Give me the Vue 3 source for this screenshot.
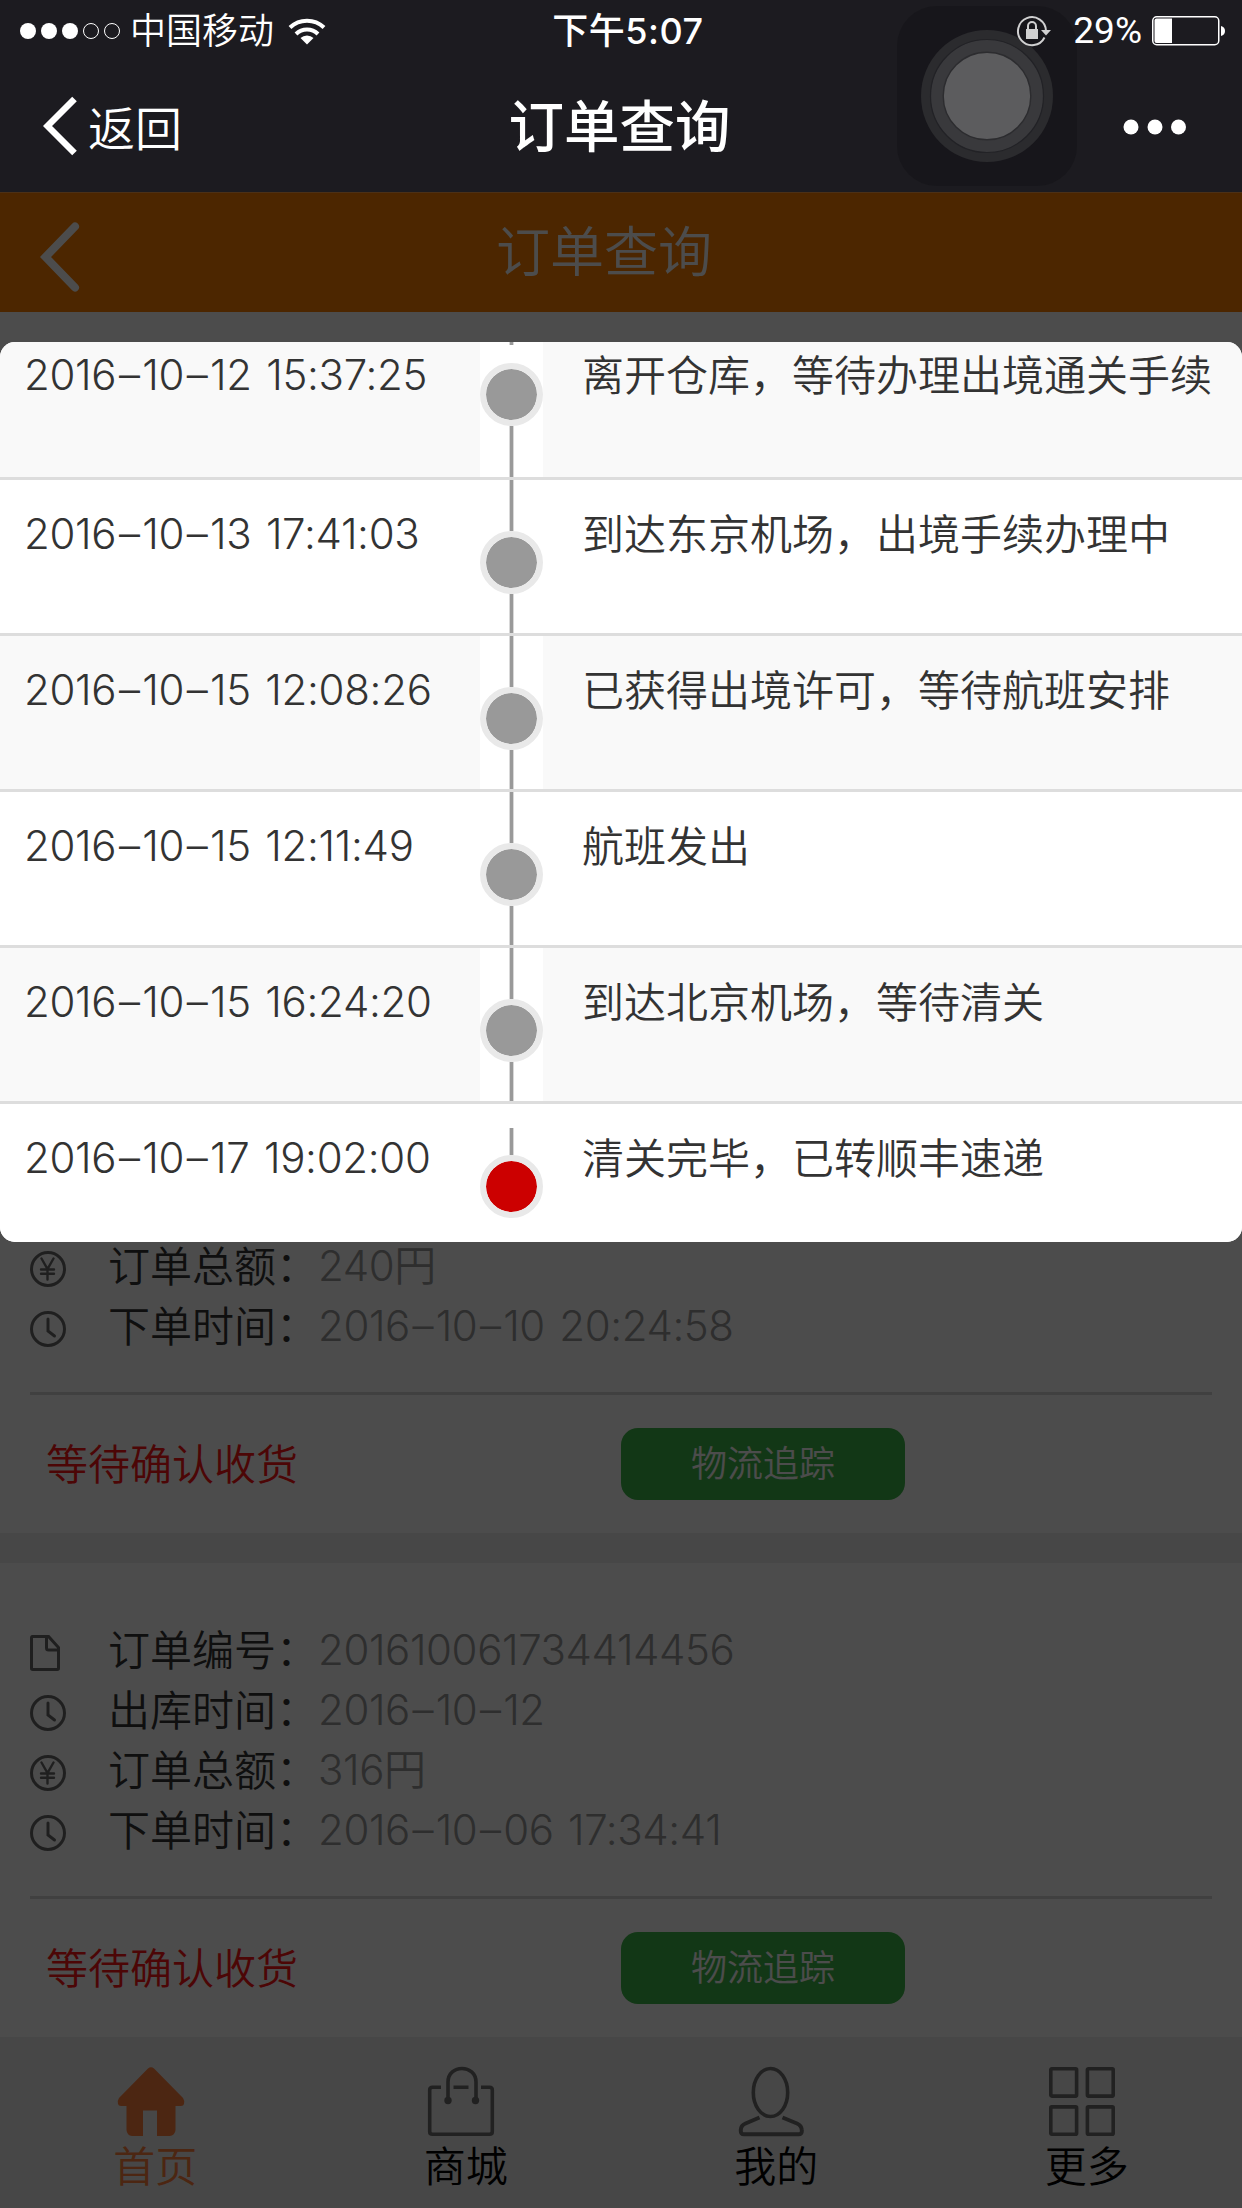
<!-- src/App.vue -->

<script setup>
import { computed } from 'vue';

// === ORDERS ===
const orders = [
  {
    id: 1,
    rows: [
      { icon: 'yen', label: '订单总额：', value: '240円' },
      { icon: 'clock', label: '下单时间：', value: '2016–10–10 20:24:58' },
    ],
    status: '等待确认收货',
  },
  {
    id: 2,
    rows: [
      { icon: 'doc', label: '订单编号：', value: '201610061734414456' },
      { icon: 'clock', label: '出库时间：', value: '2016–10–12' },
      { icon: 'yen', label: '订单总额：', value: '316円' },
      { icon: 'clock', label: '下单时间：', value: '2016–10–06 17:34:41' },
    ],
    status: '等待确认收货',
  },
];

// === LOGISTICS ===
const events = [
  { time: '2016–10–12 15:37:25', text: '离开仓库，等待办理出境通关手续' },
  { time: '2016–10–13 17:41:03', text: '到达东京机场，出境手续办理中' },
  { time: '2016–10–15 12:08:26', text: '已获得出境许可，等待航班安排' },
  { time: '2016–10–15 12:11:49', text: '航班发出' },
  { time: '2016–10–15 16:24:20', text: '到达北京机场，等待清关' },
  { time: '2016–10–17 19:02:00', text: '清关完毕，已转顺丰速递' },
];

const track = computed(() =>
  events.map((e, i) => ({
    ...e,
    first: i === 0,
    last: i === events.length - 1,
    odd: i % 2 === 0,
  }))
);

// the dashes get a little more room than the digits
const pieces = (text) => text.split(/(–)/);

const tabs = [
  { icon: 'home', label: '首页', active: true },
  { icon: 'bag', label: '商城' },
  { icon: 'user', label: '我的' },
  { icon: 'more', label: '更多' },
];
</script>

<template>
  <div class="phone">
    <header class="native">
      <div class="status-bar">
        <div class="carrier">
          <span v-for="n in 5" :key="n" class="signal" :class="{ empty: n > 3 }"></span>
          <span class="carrier-name">中国移动</span>
          <svg class="wifi" width="38" height="28" viewBox="0 0 38 28">
            <g fill="none" stroke="#fff" stroke-width="4">
              <path d="M2 10.5 A24.5 24.5 0 0 1 36 10.5" />
              <path d="M8 17 A15.8 15.8 0 0 1 30 17" />
            </g>
            <path d="M12.5 21 A9.5 9.5 0 0 1 25.5 21 L19 27.5 Z" fill="#fff" />
          </svg>
        </div>
        <div class="time">下午5:07</div>
        <div class="battery-side">
          <svg class="lock" width="36" height="32" viewBox="0 0 36 32">
            <path d="M28.5 22.5 A14 14 0 1 1 30 16" fill="none" stroke="#d0d0d1" stroke-width="2" />
            <path d="M25 15 H35 L30 20.5 Z" fill="#d0d0d1" />
            <rect x="10" y="14" width="12" height="10" fill="#d0d0d1" />
            <path d="M12 15 V11 A4 4 0 0 1 20 11 V15" fill="none" stroke="#d0d0d1" stroke-width="2" />
          </svg>
          <span class="percent">29%</span>
          <svg class="battery" width="74" height="30" viewBox="0 0 74 30">
            <rect x="0.75" y="0.75" width="66" height="28" rx="4" fill="none" stroke="#fff" stroke-width="1.5" />
            <path d="M4.5 2.5 H20 V27 H4.5 Q2.5 27 2.5 25 V4.5 Q2.5 2.5 4.5 2.5 Z" fill="#fff" />
            <path d="M69 10 Q73 11 73 15 Q73 19 69 20 Z" fill="#fff" />
          </svg>
        </div>
      </div>
      <div class="nav-bar">
        <div class="back">
          <svg width="36" height="60" viewBox="0 0 36 60">
            <path d="M31.5 3 L4.5 30 L31.5 57" fill="none" stroke="#fff" stroke-width="6.5" />
          </svg>
          <span>返回</span>
        </div>
        <h1>订单查询</h1>
        <svg class="dots" width="64" height="16" viewBox="0 0 64 16">
          <circle cx="8" cy="8" r="7.5" />
          <circle cx="32" cy="8" r="7.5" />
          <circle cx="55.5" cy="8" r="7.5" />
        </svg>
      </div>
      <!-- AssistiveTouch -->
      <svg class="assistive" width="180" height="180" viewBox="0 0 180 180">
        <rect width="180" height="180" rx="40" fill="#0e0d10" fill-opacity="0.3" />
        <circle cx="90" cy="90" r="66" fill="#2b2b2e" />
        <circle cx="90" cy="90" r="56.5" fill="#39393c" stroke="#222226" stroke-width="1.2" />
        <circle cx="90" cy="90" r="43.8" fill="#5c5c5e" stroke="#2c2c2f" stroke-width="1.4" />
      </svg>
    </header>

    <div class="web">
      <div class="title-bar">
        <svg class="title-back" width="40" height="70" viewBox="0 0 40 70">
          <path d="M35 4.5 L5.5 35 L35 65.5" fill="none" stroke="#fff" stroke-width="8" stroke-linecap="round" />
        </svg>
        <h2>订单查询</h2>
      </div>

      <div class="orders">
        <section v-for="order in orders" :key="order.id" class="order">
          <div class="info">
            <div v-for="row in order.rows" :key="row.label" class="info-row">
              <svg class="info-icon" width="36" height="36" viewBox="0 0 36 36">
                <path v-if="row.icon === 'doc'" d="M3 1.4 H18.5 L28.5 12.5 V33.3 Q28.5 34.5 27.3 34.5 H2.7 Q1.5 34.5 1.5 33.3 V2.7 Q1.5 1.4 3 1.4 Z M16.5 2 V13 Q16.5 15 18.5 15 H28" />
                <circle v-else cx="18" cy="18" r="16.5" />
                <path v-if="row.icon === 'clock'" d="M18 8 V20 L24.5 25" />
                <path v-if="row.icon === 'yen'" class="thin" d="M11.5 7.5 L17.5 18 L23.5 7.5 M17.5 18 V28.5 M11 18.5 H24 M11 22.8 H24" />
              </svg>
              <span class="label">{{ row.label }}</span>
              <span class="value num"><span v-for="(p, i) in pieces(row.value)" :key="i" :class="{ dash: p === '–' }">{{ p }}</span></span>
            </div>
          </div>
          <div class="order-foot">
            <span class="state">{{ order.status }}</span>
            <button class="trace">物流追踪</button>
          </div>
        </section>
      </div>

      <nav class="tab-bar">
        <a v-for="tab in tabs" :key="tab.label" class="tab" :class="{ active: tab.active }">
          <svg class="tab-icon" width="66" height="69" viewBox="0 0 66 69">
            <path v-if="tab.icon === 'home'" class="solid" d="M30 1.5 Q33 -1 36 1.5 L65 31 Q67 34 66 37 Q65.5 39 63 39 H57.5 V63 Q57 68.5 51.5 69 H39 V43.5 H25 V69 H14 Q9 68.5 8.5 63 V39 H3 Q0.5 39 0 37 Q-1 34 1 31 Z" />
            <g v-if="tab.icon === 'bag'">
              <path d="M13 20.2 H4.5 Q1.7 20.2 1.7 23 V64.5 Q1.7 67.3 4.5 67.3 H61.5 Q64.3 67.3 64.3 64.5 V23 Q64.3 20.2 61.5 20.2 H53 M25.5 20.2 H40.5" />
              <path d="M20 33 V15 C20 -3 48 -3 48 15 V33" />
              <circle class="solid" cx="20" cy="33.5" r="3.7" />
              <circle class="solid" cx="47.5" cy="33.5" r="3.7" />
            </g>
            <g v-if="tab.icon === 'user'">
              <ellipse cx="31.5" cy="25.5" rx="17.2" ry="24" />
              <path stroke-width="4" d="M20.5 50.5 L6.5 56.5 Q1.8 58.5 1.8 63 Q1.5 67.3 5 67.3 H59.5 Q63.2 67.3 62.8 63 Q62.5 58.5 58 56.5 L43.5 50.5" />
            </g>
            <g v-if="tab.icon === 'more'">
              <rect x="1.8" y="1.8" width="25.8" height="27.3" rx="1" />
              <rect x="38.4" y="1.8" width="25.8" height="27.3" rx="1" />
              <rect x="1.8" y="39.9" width="25.8" height="27.3" rx="1" />
              <rect x="38.4" y="39.9" width="25.8" height="27.3" rx="1" />
            </g>
          </svg>
          <span>{{ tab.label }}</span>
        </a>
      </nav>

      <!-- Logistics popup -->
      <div class="mask">
        <div class="popup">
          <div v-for="e in track" :key="e.time" class="event" :class="{ first: e.first, last: e.last, odd: e.odd }">
            <div class="event-time num"><span v-for="(p, i) in pieces(e.time)" :key="i" :class="{ dash: p === '–' }">{{ p }}</span></div>
            <div class="axis">
              <i class="line top"></i>
              <i class="dot"></i>
              <i class="line bottom"></i>
            </div>
            <div class="event-text">{{ e.text }}</div>
          </div>
        </div>
      </div>
    </div>
  </div>
</template>

<style>
body { margin: 0; background: #4c4c4c; }
</style>

<style scoped>
.phone { width: 1242px; height: 2208px; display: flex; flex-direction: column; overflow: hidden; font-family: Inter, "Noto Sans CJK SC", sans-serif; font-size: 42px; font-weight: 350; font-feature-settings: "calt" 0; color: #333; }
h1, h2 { margin: 0; }
svg { display: block; flex: none; }
.num { letter-spacing: -0.4px; word-spacing: 3px; }
.dash { padding: 0 2.6px; }

/* native header */
.native { position: relative; height: 192px; background: #1c1b20; color: #fff; flex: none; }
.status-bar { position: relative; z-index: 1; box-sizing: border-box; display: grid; grid-template-columns: 1fr auto 1fr; height: 60px; padding: 2px 16px 0 20px; align-items: center; font-size: 36px; line-height: 58px; }
.carrier { display: flex; align-items: center; }
.signal { box-sizing: border-box; width: 16px; height: 16px; margin-right: 5px; border-radius: 50%; background: #fff; }
.signal.empty { background: none; border: 1.5px solid #fff; }
.carrier-name { margin-left: 5px; }
.wifi { margin-left: 14px; }
.time { padding-left: 10px; font-weight: 500; letter-spacing: 0.5px; }
.battery-side { display: flex; align-items: center; justify-content: flex-end; }
.percent { margin: 0 10px 0 21px; font-family: Roboto, sans-serif; font-size: 37px; font-weight: 400; }
.nav-bar { display: grid; grid-template-columns: 1fr auto 1fr; align-items: center; height: 132px; padding: 0 55px 0 43px; }
.back { display: flex; align-items: center; gap: 9px; font-size: 47px; }
.back span { padding-bottom: 2px; }
h1 { padding: 1px 0 0 9px; font-size: 55.5px; font-weight: 500; line-height: 80px; }
.dots { justify-self: end; margin-top: 1px; fill: #fff; }
.assistive { position: absolute; left: 897px; top: 6px; }

/* web page */
.web { position: relative; flex: 1; display: flex; flex-direction: column; min-height: 0; background: #fff; }
.title-bar { box-sizing: border-box; height: 120px; flex: none; display: flex; align-items: center; padding: 8px 30px 0 40px; background: #ff8000; color: #fff; border-top: 1px solid #ffa04a; }
h2 { flex: 1; margin: 0 0 8px -84px; text-align: center; font-size: 54px; font-weight: 350; line-height: 80px; }
.orders { flex: 1; min-height: 0; display: flex; flex-direction: column; justify-content: flex-end; gap: 30px; background: linear-gradient(#fff 1221px, #ededed 1221px, #ededed 1251px, #fff 1251px); }
.info { margin: 0 30px; padding: 57px 0 36px; border-bottom: 3px solid #d6d6d6; }
.info-row { display: flex; align-items: center; height: 60px; line-height: 60px; }
.info-icon { margin: 6px 42px 0 0; fill: none; stroke: #6a6a6a; stroke-width: 3; stroke-linecap: round; }
.info-icon .thin { stroke-width: 2.4; }
.label { padding-top: 2px; }
.value { color: #999; }
.order-foot { display: grid; grid-template-columns: 1fr 1fr; align-items: center; height: 138px; }
.state { padding: 0 0 5px 46px; color: #ff1414; }
.trace { width: 284px; height: 72px; padding: 0; border: 0; border-radius: 17px; background: #3fb84a; color: #fff; font: inherit; font-size: 36px; line-height: 60px; }
.tab-bar { height: 171px; flex: none; display: grid; grid-template-columns: repeat(4, 1fr); background: #ededed; color: #000; }
.tab { display: flex; flex-direction: column; align-items: center; padding-top: 30px; line-height: 62px; }
.tab-icon { margin-right: 9px; fill: none; stroke: #6e6e6e; stroke-width: 3.6; overflow: visible; }
.tab-icon .solid { fill: #6e6e6e; stroke: none; }
.tab.active { color: #ff7f3c; }
.tab.active .solid { fill: #ff7f3c; }

/* popup */
.mask { position: absolute; inset: 0; padding-top: 150px; background: rgba(0, 0, 0, 0.7); }
.popup { height: 900px; border-radius: 15px; overflow: hidden; background: #fff; }
.event { box-sizing: border-box; display: grid; grid-template-columns: 480px 63px 1fr; height: 156px; border-bottom: 3px solid #ddd; }
.event.odd { background: #f9f9f9; }
.event.first { height: 138px; }
.event.last { border-bottom: 0; background: #fff; }
.event-time { padding: 24px 0 0 24px; line-height: 60px; letter-spacing: -0.3px; }
.event-text { padding: 25px 0 0 39px; line-height: 60px; white-space: nowrap; }
.first .event-time { padding-top: 3px; }
.first .event-text { padding-top: 4px; }
.axis { display: flex; flex-direction: column; align-items: center; background: #fff; }
.line { width: 5px; background: linear-gradient(90deg, #d8d8d8 1px, #999 1px, #999 4px, #d8d8d8 4px); }
.line.top { height: 51px; }
.line.bottom { flex: 1; }
.dot { box-sizing: border-box; width: 63px; height: 63px; border: 6px solid #e9e9e9; border-radius: 50%; background: #999; background-clip: padding-box; }
.first .line.top { height: 3px; margin-bottom: 18px; }
.last .line.top { height: 27px; margin-top: 24px; }
.last .line.bottom { display: none; }
.last .dot { background-color: #c00; }
</style>
